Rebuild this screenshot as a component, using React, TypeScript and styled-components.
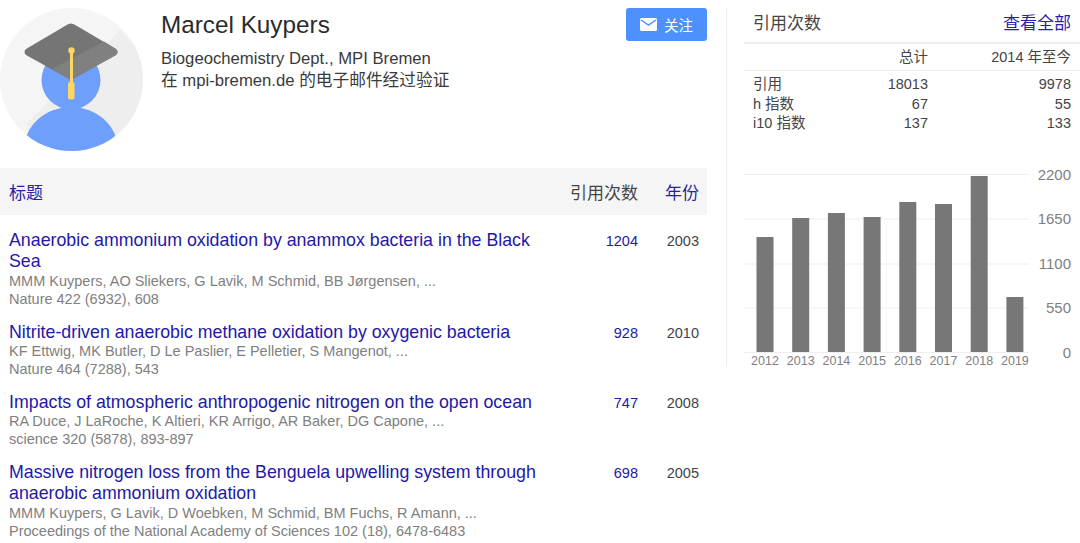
import styled, { createGlobalStyle } from 'styled-components';
import { Fragment } from 'react';

const FONT = `"Liberation Sans", "Noto Sans CJK SC", sans-serif`;

const GlobalStyle = createGlobalStyle`
    html, body {
        margin: 0;
        padding: 0;
        background: #fff;
        font-family: ${FONT};
        overflow: hidden;
    }
`

const Page = styled.div`
    display: flex;
    width: 1080px;
    height: 543px;
    overflow: hidden;
`

const LeftColumn = styled.div`
    width: 707px;
    flex-shrink: 0;
`

const Profile = styled.div`
    display: flex;
    height: 168px;
    position: relative;
`

const Avatar = styled.svg`
    width: 143px;
    height: 143px;
    margin-top: 8px;
    flex-shrink: 0;
`

const ProfileInfo = styled.div`
    margin-left: 18px;
    padding-top: 11px;
`

const Name = styled.div`
    font-size: 24.3px;
    line-height: 28px;
    margin-bottom: 9px;
    color: #2b2b2b;
`

const Affiliation = styled.div`
    font-size: 16.7px;
    line-height: 22px;
    color: #3a3a3a;
`

const FollowButton = styled.button`
    position: absolute;
    top: 8px;
    right: 0;
    width: 81px;
    height: 33px;
    display: flex;
    align-items: center;
    justify-content: center;
    gap: 7px;
    border: none;
    border-radius: 3px;
    background: #4d90fe;
    color: #fff;
    font-family: ${FONT};
    font-size: 14.5px;
    padding: 0;
`

const TableHead = styled.div`
    display: flex;
    align-items: center;
    box-sizing: border-box;
    height: 47px;
    background: #f5f5f5;
    padding: 0 8px 1px 9px;
    margin-bottom: 15px;
    font-size: 17px;
`

const HeadTitle = styled.div`
    flex: 1;
    color: #2a1fa5;
`

const HeadCites = styled.div`
    color: #444;
    margin-right: 27px;
`

const HeadYear = styled.div`
    color: #2a1fa5;
`

const Row = styled.div`
    display: flex;
    padding-left: 9px;
    margin-bottom: 14px;
`

const RowMain = styled.div`
    width: 535px;
    flex-shrink: 0;
`

const RowTitle = styled.div`
    font-size: 17.8px;
    line-height: 21.3px;
    margin-bottom: -1px;
    color: #2318a8;
`

const RowMeta = styled.div`
    font-size: 14.5px;
    line-height: 18px;
    color: #808080;
`

const RowCites = styled.div`
    width: 94px;
    flex-shrink: 0;
    text-align: right;
    font-size: 14.5px;
    line-height: 21px;
    color: #2318a8;
    padding-top: 1px;
`

const RowYear = styled.div`
    width: 61px;
    flex-shrink: 0;
    text-align: right;
    font-size: 14.5px;
    line-height: 21px;
    color: #444;
    padding-top: 1px;
`

const Divider = styled.div`
    width: 1px;
    height: 359px;
    margin: 8px 17px 0 19px;
    background: #eee;
    flex-shrink: 0;
`

const RightColumn = styled.div`
    width: 336px;
    flex-shrink: 0;
`

const SideHeader = styled.div`
    display: flex;
    justify-content: space-between;
    align-items: center;
    height: 42px;
    padding: 0 9px;
    border-bottom: 2px solid #eee;
    font-size: 17px;
`

const SideTitle = styled.div`
    color: #444;
`

const SideLink = styled.div`
    color: #2a1fa5;
`

const StatsGrid = styled.div`
    display: grid;
    grid-template-columns: 1fr 80px 143px;
    font-size: 14.5px;
    color: #444;
    line-height: 19.5px;
`

const StatsHeadCell = styled.div`
    height: 26px;
    line-height: 26px;
    border-bottom: 1px solid #eee;
    text-align: right;
    padding-right: 9px;
    margin-bottom: 4px;
`

const StatLabel = styled.div`
    padding-left: 9px;
`

const StatValue = styled.div`
    text-align: right;
    padding-right: 9px;
`

const Chart = styled.svg`
    display: block;
    width: 336px;
    height: 210px;
    margin-top: 24.5px;
`

const AxisText = styled.text`
    font-family: ${FONT};
    fill: #808080;
`

const papers = [
    {
        title: 'Anaerobic ammonium oxidation by anammox bacteria in the Black Sea',
        authors: 'MMM Kuypers, AO Sliekers, G Lavik, M Schmid, BB Jørgensen, ...',
        source: 'Nature 422 (6932), 608',
        cites: 1204,
        year: 2003,
    },
    {
        title: 'Nitrite-driven anaerobic methane oxidation by oxygenic bacteria',
        authors: 'KF Ettwig, MK Butler, D Le Paslier, E Pelletier, S Mangenot, ...',
        source: 'Nature 464 (7288), 543',
        cites: 928,
        year: 2010,
    },
    {
        title: 'Impacts of atmospheric anthropogenic nitrogen on the open ocean',
        authors: 'RA Duce, J LaRoche, K Altieri, KR Arrigo, AR Baker, DG Capone, ...',
        source: 'science 320 (5878), 893-897',
        cites: 747,
        year: 2008,
    },
    {
        title: 'Massive nitrogen loss from the Benguela upwelling system through anaerobic ammonium oxidation',
        authors: 'MMM Kuypers, G Lavik, D Woebken, M Schmid, BM Fuchs, R Amann, ...',
        source: 'Proceedings of the National Academy of Sciences 102 (18), 6478-6483',
        cites: 698,
        year: 2005,
    },
];

const stats = [
    { label: '引用', total: '18013', recent: '9978' },
    { label: 'h 指数', total: '67', recent: '55' },
    { label: 'i10 指数', total: '137', recent: '133' },
];

// chart coordinates are relative to the svg origin at (744, 158)
const bars = [
    { year: 2012, top: 79 },
    { year: 2013, top: 60 },
    { year: 2014, top: 55 },
    { year: 2015, top: 59 },
    { year: 2016, top: 44 },
    { year: 2017, top: 46 },
    { year: 2018, top: 18 },
    { year: 2019, top: 139 },
];
const ticks = [
    { label: '2200', y: 16.5 },
    { label: '1650', y: 61 },
    { label: '1100', y: 106 },
    { label: '550', y: 150 },
    { label: '0', y: 194.5 },
];

function GraduateAvatar() {
    return (
        <Avatar viewBox="0 0 143 143">
            <defs>
                <clipPath id="disc">
                    <circle cx="71.5" cy="71.5" r="71.5" />
                </clipPath>
            </defs>
            <g clipPath="url(#disc)">
                <rect width="143" height="143" fill="#f5f5f5" />
                <path d="M120 22 L143 45 L143 143 L30 143 L27 115 Z" fill="#eeeeee" />
                <circle cx="71" cy="72" r="29.500" fill="#6e9ffa" />
                <ellipse cx="71" cy="142" rx="47" ry="43" fill="#6e9ffa" />
            </g>
            <path d="M65 18 Q71 13 77 18 L116 41 Q119 44 116 47 L71 72 L26 47 Q23 44 26 41 Z" fill="#757575" />
            <path d="M104 33.500 L116 41 Q119 44 116 47 L71 72 L52 61 Z" fill="#808080" />
            <rect x="70" y="42" width="3" height="33" fill="#fdd663" />
            <circle cx="71.500" cy="42.500" r="3.200" fill="#fdd663" />
            <rect x="68" y="74" width="6.500" height="17.500" rx="2" fill="#fdd663" />
        </Avatar>
    );
}

function MailIcon() {
    return (
        <svg width="17" height="13" viewBox="0 0 17 13">
            <path d="M1.500 0 H15.500 Q17 0 17 1.500 V11.500 Q17 13 15.500 13 H1.500 Q0 13 0 11.500 V1.500 Q0 0 1.500 0 Z" fill="#fff" />
            <path d="M1 2 L8.500 7 L16 2" fill="none" stroke="#4d90fe" strokeWidth="1.500" />
        </svg>
    );
}

export default function App() {
    return (
        <Page>
            <GlobalStyle />
            <LeftColumn>
                <Profile>
                    <GraduateAvatar />
                    <ProfileInfo>
                        <Name>Marcel Kuypers</Name>
                        <Affiliation>Biogeochemistry Dept., MPI Bremen</Affiliation>
                        <Affiliation>在 mpi-bremen.de 的电子邮件经过验证</Affiliation>
                    </ProfileInfo>
                    <FollowButton><MailIcon />关注</FollowButton>
                </Profile>
                <TableHead>
                    <HeadTitle>标题</HeadTitle>
                    <HeadCites>引用次数</HeadCites>
                    <HeadYear>年份</HeadYear>
                </TableHead>
                {papers.map((p) => (
                    <Row key={p.title}>
                        <RowMain>
                            <RowTitle>{p.title}</RowTitle>
                            <RowMeta>{p.authors}</RowMeta>
                            <RowMeta>{p.source}</RowMeta>
                        </RowMain>
                        <RowCites>{p.cites}</RowCites>
                        <RowYear>{p.year}</RowYear>
                    </Row>
                ))}
            </LeftColumn>
            <Divider />
            <RightColumn>
                <SideHeader>
                    <SideTitle>引用次数</SideTitle>
                    <SideLink>查看全部</SideLink>
                </SideHeader>
                <StatsGrid>
                    <StatsHeadCell />
                    <StatsHeadCell>总计</StatsHeadCell>
                    <StatsHeadCell>2014 年至今</StatsHeadCell>
                    {stats.map((s) => (
                        <Fragment key={s.label}>
                            <StatLabel>{s.label}</StatLabel>
                            <StatValue>{s.total}</StatValue>
                            <StatValue>{s.recent}</StatValue>
                        </Fragment>
                    ))}
                </StatsGrid>
                <Chart viewBox="0 0 336 210">
                    {ticks.map((t) => (
                        <Fragment key={t.label}>
                            <line x1="0" x2="285" y1={t.y} y2={t.y} stroke="#eee" />
                            <AxisText x="327" y={t.y + 5} fontSize="15" textAnchor="end">{t.label}</AxisText>
                        </Fragment>
                    ))}
                    {bars.map((b, i) => (
                        <Fragment key={b.year}>
                            <rect x={12.5 + i * 35.7} y={b.top} width="17" height={194 - b.top} fill="#777" />
                            <AxisText x={21 + i * 35.7} y={207} fontSize="12.500" textAnchor="middle">{b.year}</AxisText>
                        </Fragment>
                    ))}
                </Chart>
            </RightColumn>
        </Page>
    );
}
